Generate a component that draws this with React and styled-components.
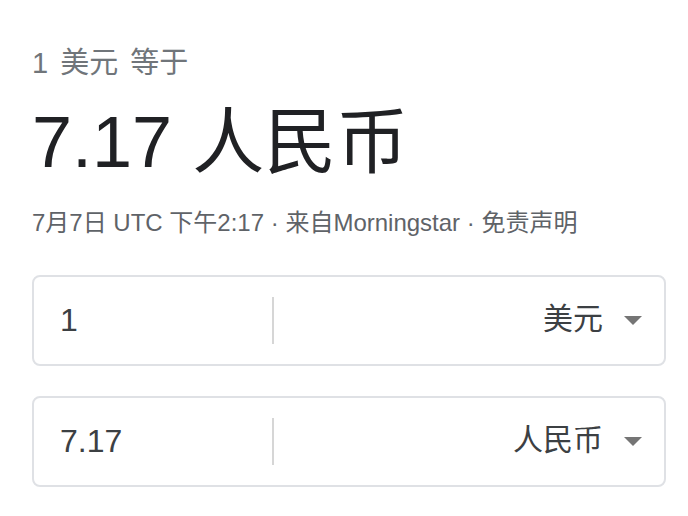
import React from 'react';
import styled, { createGlobalStyle } from 'styled-components';

const GlobalStyle = createGlobalStyle`
  body {
    margin: 0;
    background: #fff;
    font-family: "Liberation Sans", Arial, "Noto Sans CJK SC", sans-serif;
  }
`;

const Card = styled.div`
  width: 688px;
  height: 516px;
  box-sizing: border-box;
  padding: 46px 22px 0 32px;
  overflow: hidden;
`;

const Label = styled.div`
  font-size: 29px;
  line-height: 34px;
  word-spacing: 4px;
  color: #70757a;
`;

const Result = styled.div`
  margin-top: 22px;
  font-size: 72px;
  line-height: 80px;
  color: #202124;
`;

const Meta = styled.div`
  margin-top: 25px;
  font-size: 24px;
  line-height: 32px;
  color: #5f6368;
`;

const Converter = styled.div`
  margin-top: 36px;
  display: flex;
  flex-direction: column;
  gap: 30px;
`;

const Row = styled.div`
  display: flex;
  align-items: center;
  height: 91px;
  box-sizing: border-box;
  border: 2px solid #dfe1e5;
  border-radius: 8px;
`;

const Amount = styled.div`
  width: 238px;
  box-sizing: border-box;
  padding-left: 26px;
  font-size: 32px;
  color: #3c4043;
`;

const Divider = styled.div`
  width: 2px;
  height: 47px;
  background: #d6d6d6;
`;

const Unit = styled.div`
  flex: 1;
  display: flex;
  align-items: center;
  justify-content: flex-end;
  gap: 21px;
  padding-right: 22px;
  font-size: 30px;
  line-height: 40px;
  color: #3c4043;
`;

const UnitName = styled.span`
  margin-top: -4px;
`;

const Caret = styled.span`
  width: 0;
  height: 0;
  border-left: 9px solid transparent;
  border-right: 9px solid transparent;
  border-top: 9px solid #757575;
`;

const rows = [
  { amount: '1', unit: '美元' },
  { amount: '7.17', unit: '人民币' },
];

export default function App() {
  return (
    <>
      <GlobalStyle />
      <Card>
        <Label>1 美元 等于</Label>
        <Result>7.17 人民币</Result>
        <Meta>7月7日 UTC 下午2:17 · 来自Morningstar · 免责声明</Meta>
        <Converter>
          {rows.map(r => (
            <Row key={r.unit}>
              <Amount>{r.amount}</Amount>
              <Divider />
              <Unit>
                <UnitName>{r.unit}</UnitName>
                <Caret />
              </Unit>
            </Row>
          ))}
        </Converter>
      </Card>
    </>
  );
}
